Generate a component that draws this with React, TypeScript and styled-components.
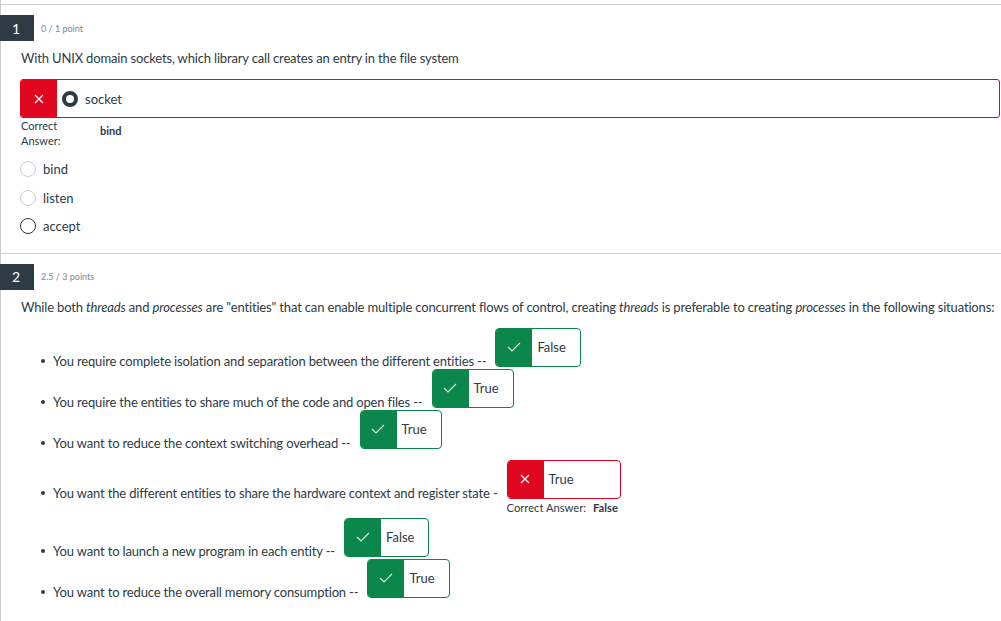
import React from "react";
import styled, { createGlobalStyle } from "styled-components";

const GlobalStyle = createGlobalStyle`
    body {
        margin: 0;
        background: #ffffff;
        font-family: Lato, "Noto Sans", sans-serif;
        color: #2d3b45;
    }
`;

const Page = styled.div`
    border-left: 1px solid #c7cdd1;
    padding-top: 4px;
    min-height: 617px;
`;

const Question = styled.section<{ $last?: boolean }>`
    border-top: 1px solid #c7cdd1;
    padding: 10px 0 ${(p) => (p.$last ? "20px" : "12px")} 0;
`;

const Header = styled.div`
    display: flex;
    align-items: center;
    gap: 7px;
    margin-left: -1px;
    height: 26px;
`;

const Num = styled.div`
    width: 34px;
    height: 26px;
    box-sizing: border-box;
    padding-left: 12px;
    background: #2d3b45;
    color: #ffffff;
    font-size: 14px;
    display: flex;
    align-items: center;
`;

const Points = styled.span`
    font-size: 9px;
    color: #7a8791;
`;

const Prompt = styled.p`
    margin: 8px 0 0 20px;
    font-size: 13px;
    line-height: 18px;
    letter-spacing: -0.16px;
    white-space: nowrap;
`;

const AnswerRow = styled.div`
    display: flex;
    align-items: center;
    height: 39px;
    box-sizing: border-box;
    margin: 12px 1px 0 19px;
    border: 1px solid #e0061f;
    border-radius: 3px;
    overflow: hidden;
`;

const Mark = styled.div<{ $ok: boolean }>`
    width: 37px;
    align-self: stretch;
    margin: -1px 0 -1px -1px;
    background: ${(p) => (p.$ok ? "#0b874b" : "#e0061f")};
    display: flex;
    align-items: center;
    justify-content: center;
    flex-shrink: 0;
`;

const Radio = styled.span<{ $state: "picked" | "dark" | "light" }>`
    width: 16px;
    height: 16px;
    box-sizing: border-box;
    border-radius: 50%;
    flex-shrink: 0;
    border: ${(p) =>
        p.$state === "picked"
            ? "4.5px solid #2d3b45"
            : p.$state === "dark"
            ? "1.5px solid #2d3b45"
            : "1px solid #c7cdd1"};
`;

const PickedRadio = styled(Radio)`
    margin-left: 5px;
`;

const AnswerText = styled.span`
    font-size: 13px;
    margin-left: 7px;
`;

const CorrectBlock = styled.div`
    display: flex;
    margin-left: 20px;
`;

const CorrectLabel = styled.div`
    width: 79px;
    font-size: 11px;
    line-height: 15px;
`;

const CorrectValue = styled.div`
    font-size: 11px;
    font-weight: 700;
    padding-top: 6px;
`;

const Options = styled.div`
    margin: 7px 0 0 19px;
`;

const Option = styled.label`
    display: flex;
    align-items: center;
    height: 28.5px;
    font-size: 13px;
`;

const OptionText = styled.span`
    margin-left: 7px;
`;

const Statements = styled.ul`
    list-style: none;
    margin: 12px 0 0 40px;
    padding: 0;
`;

const Item = styled.li<{ $gap: number }>`
    display: flex;
    align-items: flex-start;
    gap: 9px;
    margin-top: ${(p) => p.$gap}px;
`;

const Statement = styled.span`
    display: flex;
    align-items: center;
    height: 39px;
    box-sizing: border-box;
    padding-top: 27px;
    font-size: 13px;
    line-height: 12px;
    letter-spacing: -0.16px;
    white-space: nowrap;
`;

const Bullet = styled.span`
    width: 4px;
    height: 4px;
    border-radius: 50%;
    background: #2d3b45;
    margin-right: 8px;
    flex-shrink: 0;
`;

const BadgeWrap = styled.div`
    display: flex;
    flex-direction: column;
    align-items: stretch;
`;

const Badge = styled.div<{ $ok: boolean }>`
    display: flex;
    align-items: center;
    height: 39px;
    box-sizing: border-box;
    border: 1px solid ${(p) => (p.$ok ? "#0b874b" : "#e0061f")};
    border-radius: 4px;
    overflow: hidden;
    background: #ffffff;
`;

const BadgeText = styled.span`
    font-size: 13px;
    padding: 0 14px 0 5px;
`;

const BadgeNote = styled.div`
    font-size: 11.2px;
    line-height: 16px;
    margin-top: 1px;
    padding-right: 3px;
    white-space: nowrap;

    b {
        font-weight: 700;
        margin-left: 4px;
    }
`;

const Check = () => (
    <svg width="14" height="10" viewBox="0 0 14 10">
        <polyline points="1,5 5,9 13,1" fill="none" stroke="rgba(255,255,255,0.85)" strokeWidth="1.1" />
    </svg>
);

const Cross = () => (
    <svg width="10" height="10" viewBox="0 0 10 10">
        <path d="M1 1 L9 9 M9 1 L1 9" stroke="#ffffff" strokeWidth="1.3" />
    </svg>
);

interface Row {
    text: string;
    answer: string;
    ok: boolean;
    gap: number;
    note?: string;
}

const rows: Row[] = [
    { text: "You require complete isolation and separation between the different entities --", answer: "False", ok: true, gap: 0 },
    { text: "You require the entities to share much of the code and open files --", answer: "True", ok: true, gap: 2 },
    { text: "You want to reduce the context switching overhead --", answer: "True", ok: true, gap: 2 },
    { text: "You want the different entities to share the hardware context and register state -", answer: "True", ok: false, gap: 11, note: "False" },
    { text: "You want to launch a new program in each entity --", answer: "False", ok: true, gap: 2 },
    { text: "You want to reduce the overall memory consumption --", answer: "True", ok: true, gap: 2 },
];

const App: React.FC = () => {
    return (
        <>
            <GlobalStyle />
            <Page>
                <Question>
                    <Header>
                        <Num>1</Num>
                        <Points>0 / 1 point</Points>
                    </Header>
                    <Prompt>With UNIX domain sockets, which library call creates an entry in the file system</Prompt>
                    <AnswerRow>
                        <Mark $ok={false}>
                            <Cross />
                        </Mark>
                        <PickedRadio $state="picked" />
                        <AnswerText>socket</AnswerText>
                    </AnswerRow>
                    <CorrectBlock>
                        <CorrectLabel>
                            Correct
                            <br />
                            Answer:
                        </CorrectLabel>
                        <CorrectValue>bind</CorrectValue>
                    </CorrectBlock>
                    <Options>
                        <Option>
                            <Radio $state="light" />
                            <OptionText>bind</OptionText>
                        </Option>
                        <Option>
                            <Radio $state="light" />
                            <OptionText>listen</OptionText>
                        </Option>
                        <Option>
                            <Radio $state="dark" />
                            <OptionText>accept</OptionText>
                        </Option>
                    </Options>
                </Question>
                <Question $last>
                    <Header>
                        <Num>2</Num>
                        <Points>2.5 / 3 points</Points>
                    </Header>
                    <Prompt>
                        While both <i>threads</i> and <i>processes</i> are "entities" that can enable multiple concurrent
                        flows of control, creating <i>threads</i> is preferable to creating <i>processes</i> in the
                        following situations:
                    </Prompt>
                    <Statements>
                        {rows.map((r) => (
                            <Item key={r.text} $gap={r.gap}>
                                <Statement>
                                    <Bullet />
                                    {r.text}
                                </Statement>
                                <BadgeWrap>
                                    <Badge $ok={r.ok}>
                                        <Mark $ok={r.ok}>{r.ok ? <Check /> : <Cross />}</Mark>
                                        <BadgeText>{r.answer}</BadgeText>
                                    </Badge>
                                    {r.note && (
                                        <BadgeNote>
                                            Correct Answer: <b>{r.note}</b>
                                        </BadgeNote>
                                    )}
                                </BadgeWrap>
                            </Item>
                        ))}
                    </Statements>
                </Question>
            </Page>
        </>
    );
};

export default App;
